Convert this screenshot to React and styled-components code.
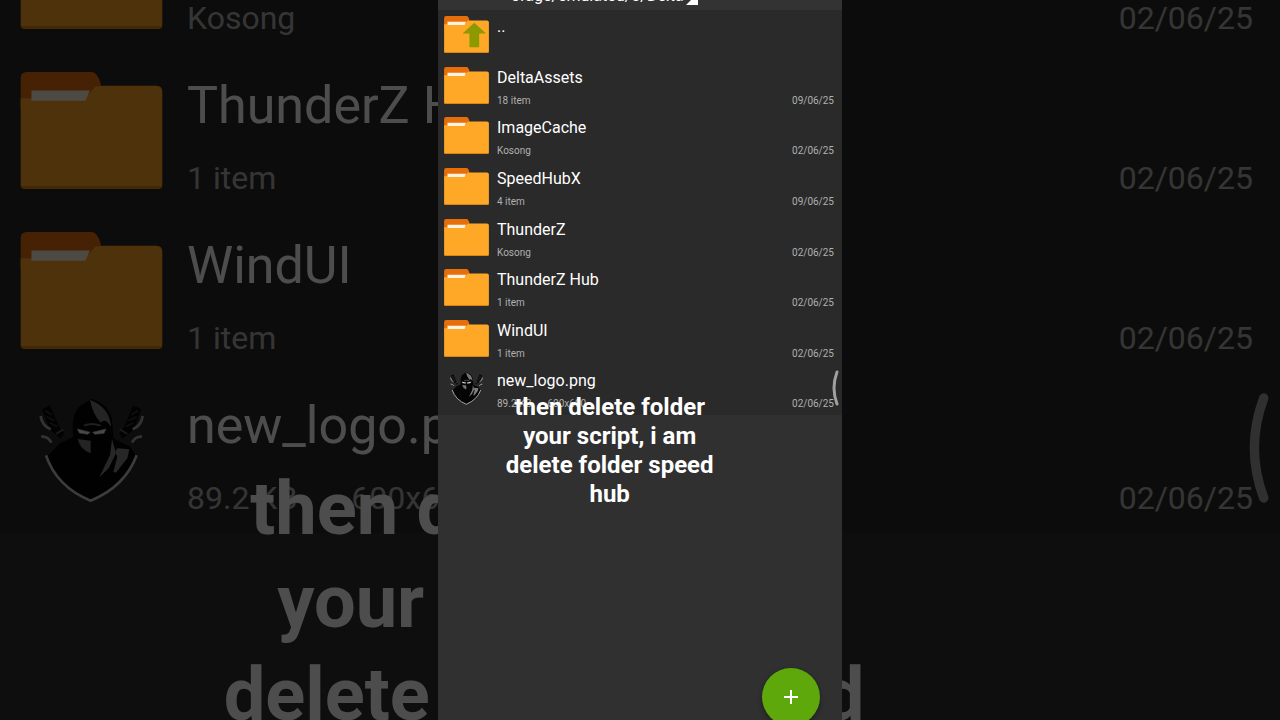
import React from 'react'
import styled, { createGlobalStyle, ThemeProvider } from 'styled-components'

const entries = [
  { name: '..', kind: 'up' },
  { name: 'DeltaAssets', info: ['18 item'], date: '09/06/25' },
  { name: 'ImageCache', info: ['Kosong'], date: '02/06/25' },
  { name: 'SpeedHubX', info: ['4 item'], date: '09/06/25' },
  { name: 'ThunderZ', info: ['Kosong'], date: '02/06/25' },
  { name: 'ThunderZ Hub', info: ['1 item'], date: '02/06/25' },
  { name: 'WindUI', info: ['1 item'], date: '02/06/25' },
  { name: 'new_logo.png', kind: 'image', info: ['89.2 KB', '600x600'], date: '02/06/25' },
]

// the same list is drawn twice: at phone size and enlarged behind it
const phoneSizes = {
  row: 'minmax(50px, 1fr)',
  listHeight: '405px',
  listOffset: '0',
  padding: '6px 8px 0 6px',
  icon: '45px',
  iconHeight: '37px',
  gap: '16px',
  columnGap: '8px',
  name: '16px',
  nameLine: '22px',
  info: '10px',
  infoLine: '12px',
  infoGap: '6px',
  caption: '24px',
  captionLine: '29px',
  captionTop: '393px',
  handleTop: '370px',
  handleRight: '3px',
  handleWidth: '8px',
  handleHeight: '36px',
}

const backdropSizes = {
  row: '160px',
  listHeight: 'auto',
  listOffset: '-107px',
  padding: '19px 27px 0 20px',
  icon: '143px',
  iconHeight: '117px',
  gap: '54px',
  columnGap: '24px',
  name: '52px',
  nameLine: '68px',
  info: '32px',
  infoLine: '38px',
  infoGap: '19px',
  caption: '74px',
  captionLine: '93px',
  captionTop: '462px',
  handleTop: '391px',
  handleRight: '10px',
  handleWidth: '25px',
  handleHeight: '114px',
}

const FolderIcon = ({ up }) => (
  <Icon viewBox="0 0 46 38" aria-hidden="true">
    <path d="M0 2Q0 0 2 0H23Q25 0 26 4L27 8V12H0Z" fill="#e66f0c" />
    <path d="M0 8.5H21L24 5Q25 4.5 27 4.5H44Q46 4.5 46 6.5V36.5Q46 38 44 38H2Q0 38 0 36.5Z" fill="#ffa726" />
    <path d="M3.5 6H22.5L21 9.3H3.5Z" fill="#fff3e0" />
    <path d="M0 37H46Q46 38 44 38H2Q0 38 0 37Z" fill="#dd860f" />
    {up && <path d="M31 7L43 18H36V32H26V18H19Z" fill="#8a9a00" />}
  </Icon>
)

const LogoIcon = () => (
  <Icon viewBox="-30 6 429 351" aria-hidden="true">
    <path d="M50 200L90 160L130 140Q120 60 160 42L185 26Q245 45 247 100L250 145L300 170L320 200Q290 290 182 335Q80 290 50 200Z" fill="#050505" />
    <path d="M48 196Q80 290 182 332Q285 290 320 196" fill="none" stroke="#c5c5c5" strokeWidth="8" />
    <path d="M36 58L60 46L88 112L102 128L92 146L60 120ZM334 58L310 46L282 112L268 128L278 146L310 120Z" fill="#080808" />
    <path d="M46 62L66 74M50 80L74 92M60 98L82 110M324 62L304 74M320 80L296 92M310 98L288 110" stroke="#333" strokeWidth="5" />
    <path d="M32 78Q36 108 62 118M338 78Q334 108 308 118M34 140Q54 138 64 158M336 140Q316 138 306 158" fill="none" stroke="#aaa" strokeWidth="8" />
    <path d="M78 132L100 118M292 132L270 118" stroke="#555" strokeWidth="6" />
    <path d="M180 30Q240 52 243 112Q228 82 212 98Q188 72 180 30Z" fill="#777" />
    <path d="M162 107Q186 97 212 107" fill="none" stroke="#666" strokeWidth="6" />
    <path d="M142 117L180 127L174 133L148 129ZM188 127L228 117L222 130L195 133Z" fill="#eee" stroke="#bbb" strokeWidth="2" />
    <path d="M143 147L182 152V190Q150 178 143 147Z" fill="#777" />
    <path d="M246 148L240 195L208 262L236 235L258 190ZM262 175L298 178L292 205L258 248L250 245L262 200L255 185Z" fill="#808080" />
  </Icon>
)

const EntryIcon = ({ kind }) => {
  if (kind === 'image') return <LogoIcon />
  return <FolderIcon up={kind === 'up'} />
}

const FileList = ({ items }) => (
  <List>
    {items.map((item) => (
      <Row key={item.name}>
        <EntryIcon kind={item.kind} />
        <Details>
          <Name>{item.name}</Name>
          {item.info && (
            <Meta>
              {item.info.map((text) => (
                <span key={text}>{text}</span>
              ))}
              <FileDate>{item.date}</FileDate>
            </Meta>
          )}
        </Details>
      </Row>
    ))}
  </List>
)

const Overlay = () => (
  <>
    <Handle viewBox="0 0 8 36" aria-hidden="true">
      <path d="M6 2Q0 18 6 34" fill="none" stroke="#a0a0a0" strokeWidth="3" strokeLinecap="round" />
    </Handle>
    <Caption>then delete folder your script, i am delete folder speed hub</Caption>
  </>
)

const App = () => {
  return (
    <Stage>
      <GlobalStyle />
      <ThemeProvider theme={backdropSizes}>
        <Backdrop aria-hidden="true">
          <FileList items={entries.slice(4)} />
          <Overlay />
        </Backdrop>
      </ThemeProvider>
      <ThemeProvider theme={phoneSizes}>
        <Phone>
          <PathBar>
            <Path>orage/emulated/0/Delta</Path>
            <Corner viewBox="0 0 12 12" aria-hidden="true">
              <path d="M12 0V12H0Z" fill="#fff" />
            </Corner>
          </PathBar>
          <FileList items={entries} />
          <Overlay />
          <AddButton aria-label="Add">
            <svg width="16" height="16" viewBox="0 0 16 16" aria-hidden="true">
              <path d="M8 1V15M1 8H15" stroke="#fff" strokeWidth="2" />
            </svg>
          </AddButton>
        </Phone>
      </ThemeProvider>
    </Stage>
  )
}

export default App

const GlobalStyle = createGlobalStyle`
  body {
    margin: 0;
    background: #000;
    font-family: Roboto, "Liberation Sans", sans-serif;
  }
`
const Stage = styled.div`
  display: grid;
  grid-template-columns: 1fr;
  height: 100vh;
  overflow: hidden;
`
const Screen = styled.div`
  grid-area: 1 / 1;
  position: relative;
  overflow: hidden;
  background: #303030;
  color: #fff;
`
const Backdrop = styled(Screen)`
  opacity: 0.3;
`
const Phone = styled(Screen)`
  width: 404px;
  justify-self: center;
`
const PathBar = styled.header`
  display: flex;
  align-items: flex-end;
  gap: 2px;
  height: 10px;
  padding-left: 73px;
  background: #333;
`
const Path = styled.span`
  font-size: 16px;
  line-height: 20px;
  padding-bottom: 4px;
`
const Corner = styled.svg`
  width: 12px;
  height: 12px;
  margin-bottom: 5px;
`
const List = styled.ul`
  display: grid;
  grid-auto-rows: ${({ theme }) => theme.row};
  height: ${({ theme }) => theme.listHeight};
  margin: ${({ theme }) => theme.listOffset} 0 0;
  padding: 0;
  list-style: none;
  background: #2a2a2a;
`
const Row = styled.li`
  display: flex;
  gap: ${({ theme }) => theme.columnGap};
  padding: ${({ theme }) => theme.padding};
`
const Icon = styled.svg`
  flex: none;
  width: ${({ theme }) => theme.icon};
  height: ${({ theme }) => theme.iconHeight};
`
const Details = styled.div`
  flex: 1;
  min-width: 0;
`
const Name = styled.div`
  font-size: ${({ theme }) => theme.name};
  line-height: ${({ theme }) => theme.nameLine};
`
const Meta = styled.div`
  display: flex;
  gap: ${({ theme }) => theme.gap};
  margin-top: ${({ theme }) => theme.infoGap};
  font-size: ${({ theme }) => theme.info};
  line-height: ${({ theme }) => theme.infoLine};
  color: #b0b0b0;
`
const FileDate = styled.time`
  margin-left: auto;
`
const Caption = styled.p`
  position: absolute;
  top: ${({ theme }) => theme.captionTop};
  left: 15%;
  width: 55%;
  margin: 0;
  text-align: center;
  font-weight: 700;
  font-size: ${({ theme }) => theme.caption};
  line-height: ${({ theme }) => theme.captionLine};
`
const Handle = styled.svg`
  position: absolute;
  top: ${({ theme }) => theme.handleTop};
  right: ${({ theme }) => theme.handleRight};
  width: ${({ theme }) => theme.handleWidth};
  height: ${({ theme }) => theme.handleHeight};
`
const AddButton = styled.button`
  position: absolute;
  right: 22px;
  bottom: -6px;
  display: grid;
  place-content: center;
  width: 58px;
  height: 58px;
  padding: 0;
  border: 0;
  border-radius: 50%;
  background: #5ea80b;
  box-shadow: 0 2px 5px rgba(0, 0, 0, 0.4);
  cursor: pointer;
`
